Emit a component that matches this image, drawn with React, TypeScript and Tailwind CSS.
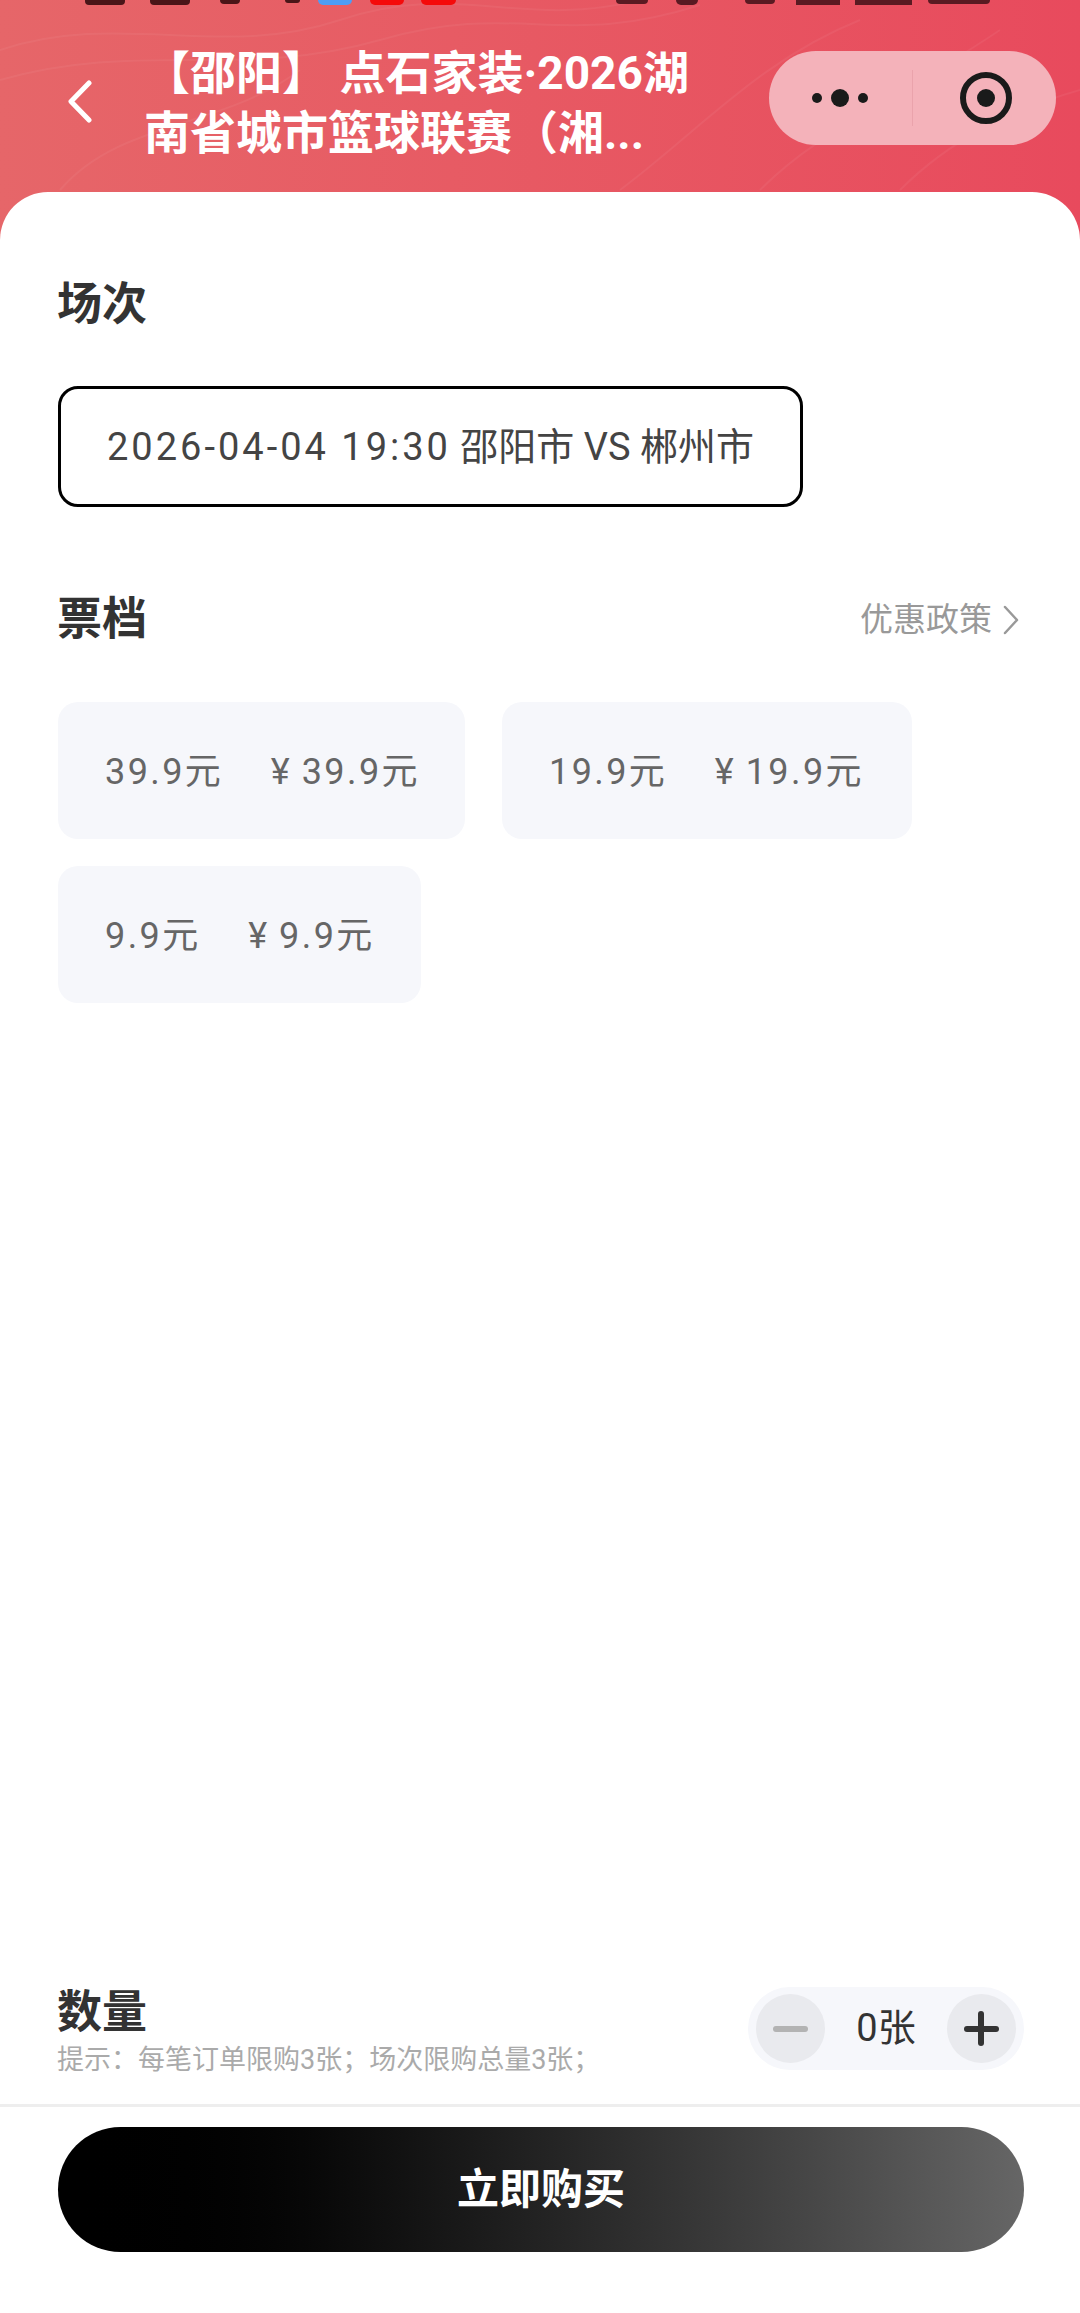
import React from "react";

const tickets = [
  { name: "39.9", price: "39.9", width: "w-[407px]" },
  { name: "19.9", price: "19.9", width: "w-[410px]" },
  { name: "9.9", price: "9.9", width: "w-[363px]" },
];

const font = "font-['Roboto','Noto_Sans_CJK_SC',sans-serif]";

function StatusBits() {
  // 状态栏被裁掉了,只剩下底部一点点
  return (
    <div className="flex h-[5px] items-start overflow-hidden">
      <div className="ml-[85px] h-[5px] w-[40px] rounded-b-sm bg-[#4a1518]" />
      <div className="ml-[25px] h-[5px] w-[40px] rounded-b-sm bg-[#4a1518]" />
      <div className="ml-[30px] h-[4px] w-[20px] rounded-b-full bg-[#4a1518]" />
      <div className="ml-[45px] h-[3px] w-[15px] rounded-b-full bg-[#4a1518]" />
      <div className="ml-[18px] h-[5px] w-[34px] rounded-b-md bg-[#4d9df5]" />
      <div className="ml-[18px] h-[5px] w-[34px] rounded-b-md bg-[#f50a0a]" />
      <div className="ml-[17px] h-[5px] w-[35px] rounded-b-md bg-[#f50a0a]" />
      <div className="ml-[160px] h-[4px] w-[32px] rounded-b-md bg-[#5a1a22]" />
      <div className="ml-[28px] h-[5px] w-[22px] rounded-b-md bg-[#5a1a22]" />
      <div className="ml-[47px] h-[4px] w-[30px] rounded-b-md bg-[#5a1a22]" />
      <div className="ml-[21px] h-[5px] w-[44px] bg-[#5a1a22]" />
      <div className="ml-[15px] h-[5px] w-[57px] bg-[#5a1a22]" />
      <div className="ml-[16px] h-[4px] w-[62px] rounded-b-md bg-[#5a1a22]" />
    </div>
  );
}

function Capsule() {
  return (
    <div className="flex h-[94px] w-[287px] items-center rounded-full bg-[#f4b2ba]">
      <div className="flex h-[56px] w-[144px] items-center justify-end gap-[9px] border-r border-[#eaa3ac] pr-[44px]">
        <span className="h-[10px] w-[10px] rounded-full bg-[#1a1a1a]" />
        <span className="h-[18px] w-[18px] rounded-full bg-[#1a1a1a]" />
        <span className="h-[10px] w-[10px] rounded-full bg-[#1a1a1a]" />
      </div>
      <div className="ml-[47px] flex h-[52px] w-[52px] items-center justify-center rounded-full border-[6px] border-[#1a1a1a]">
        <span className="h-[18px] w-[18px] rounded-full bg-[#1a1a1a]" />
      </div>
    </div>
  );
}

export default function App() {
  return (
    <div className={`flex h-[2313px] w-[1080px] flex-col overflow-hidden bg-white ${font}`}>
      <header className="relative h-[240px] shrink-0 overflow-hidden bg-gradient-to-r from-[#e66669] to-[#e84a5d]">
        <svg className="absolute inset-0 h-full w-full" viewBox="0 0 1080 240" fill="none" stroke="#ffffff" strokeOpacity="0.05" strokeWidth="2">
          <path d="M0 50 C120 10 220 60 340 20 S520 30 640 0" />
          <path d="M0 80 C140 40 240 80 380 40 S560 50 700 5" />
          <path d="M60 190 C120 120 220 130 300 70" />
          <path d="M620 190 C700 130 760 60 860 20" />
          <path d="M760 190 C820 130 880 110 1000 30" />
          <path d="M900 190 C950 140 1010 110 1080 90" />
        </svg>
        <div className="relative">
          <StatusBits />
          <div className="mt-[36px] flex items-start">
            <svg className="mt-[39px] ml-[67px] h-[43px] w-[25px] shrink-0" viewBox="0 0 25 43" fill="none" stroke="#ffffff" strokeWidth="5" strokeLinecap="round" strokeLinejoin="round">
              <path d="M22 3 L4 21.5 L22 40" />
            </svg>
            <h1 className="mt-[2px] ml-[52px] w-[605px] text-[46px] leading-[60px] font-bold text-white">
              【邵阳】 点石家装·2026湖
              <br />
              南省城市篮球联赛（湘...
            </h1>
            <div className="mt-[10px] ml-[20px]">
              <Capsule />
            </div>
          </div>
        </div>
      </header>

      <main className="relative -mt-[48px] flex flex-1 flex-col rounded-t-[48px] bg-white">
        <section className="px-[58px] pt-[83px]">
          <h2 className="-ml-[1px] text-[45px] leading-[60px] font-bold text-[#333]">场次</h2>
          <div className="mt-[51px] flex h-[121px] w-[745px] items-center justify-center rounded-[20px] border-[3px] border-black pt-[2px] text-[38px] text-[#444]">
            <span className="tracking-[3px]">2026-04-04 19:30</span>
            <span>&nbsp;邵阳市 VS 郴州市</span>
          </div>
        </section>

        <section className="mt-[83px] px-[58px]">
          <div className="flex items-center justify-between">
            <h2 className="-ml-[1px] text-[45px] leading-[60px] font-bold text-[#333]">票档</h2>
            <div className="mr-[3px] flex items-center text-[33px] text-[#999]">
              优惠政策
              <svg className="ml-[11px] h-[30px] w-[16px]" viewBox="0 0 16 30" fill="none" stroke="#999999" strokeWidth="2.5" strokeLinecap="round" strokeLinejoin="round">
                <path d="M2 2 L14 15 L2 28" />
              </svg>
            </div>
          </div>
          <div className="mt-[52px] flex flex-wrap gap-x-[37px] gap-y-[27px]">
            {tickets.map((t) => (
              <div key={t.name} className={`flex h-[137px] items-center gap-[50px] rounded-[20px] bg-[#f6f7fb] pt-[2px] pl-[47px] text-[36px] text-[#666] ${t.width}`}>
                <span>
                  <span className="tracking-[2.4px]">{t.name}</span>元
                </span>
                <span>
                  <span className="mr-[12px]">¥</span>
                  <span className="tracking-[2.4px]">{t.price}</span>元
                </span>
              </div>
            ))}
          </div>
        </section>

        <div className="flex-1" />

        <section className="flex h-[118px] items-start justify-between pr-[56px] pl-[58px]">
          <div className="-mt-[3px]">
            <h2 className="-ml-[1px] text-[45px] leading-[60px] font-bold text-[#333]">数量</h2>
            <p className="-mt-[1px] -ml-[1px] text-[27px] leading-[36px] text-[#aaa]">提示：每笔订单限购3张；场次限购总量3张；</p>
          </div>
          <div className="mt-[1px] flex h-[83px] w-[276px] items-center justify-between rounded-full bg-[#f6f7fb] px-[8px]">
            <div className="flex h-[69px] w-[69px] items-center justify-center rounded-full bg-[#e9eaee]">
              <span className="h-[6px] w-[35px] rounded-full bg-[#b3b3b3]" />
            </div>
            <span className="text-[38px] text-[#333]">0张</span>
            <div className="relative flex h-[69px] w-[69px] items-center justify-center rounded-full bg-[#e9eaee]">
              <span className="h-[6px] w-[35px] rounded-full bg-[#333]" />
              <span className="absolute h-[35px] w-[6px] rounded-full bg-[#333]" />
            </div>
          </div>
        </section>

        <div className="h-[3px] bg-[#eeeeee]" />

        <footer className="pt-[20px] pr-[56px] pb-[61px] pl-[58px]">
          <button className="flex h-[125px] w-[966px] items-center justify-center rounded-full bg-gradient-to-r from-black to-[#666] text-[42px] font-bold text-white">
            立即购买
          </button>
        </footer>
      </main>
    </div>
  );
}
